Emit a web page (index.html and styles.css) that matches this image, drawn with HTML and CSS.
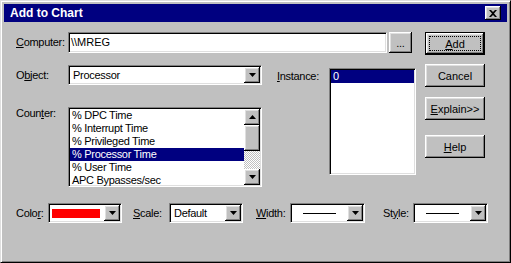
FILE: index.html
```html
<!DOCTYPE html>
<html lang="en">
<head>
    <meta charset="UTF-8">
    <title>Add to Chart</title>
    <link rel="stylesheet" href="styles.css">
</head>
<body>
    <div class="window">
        <div class="titlebar">
            <span class="title">Add to Chart</span>
            <button class="close">
                <svg width="8" height="7" viewBox="0 0 8 7"><path d="M0 0h2l2 2 2-2h2L5 3.5 8 7H6L4 5 2 7H0l3-3.5z"/></svg>
            </button>
        </div>
        <div class="client">
            <div class="top">
                <div class="form">
                    <div class="row row-computer">
                        <label class="lbl lbl-main"><u>C</u>omputer:</label>
                        <div class="edit">\\MREG</div>
                        <button class="btn btn-browse">...</button>
                    </div>
                    <div class="row-mid">
                        <div class="col-left">
                            <div class="row row-object">
                                <label class="lbl lbl-main">O<u>b</u>ject:</label>
                                <div class="combo combo-object">
                                    <span class="combo-value">Processor</span>
                                    <span class="drop"><svg width="7" height="4" viewBox="0 0 7 4"><path d="M0 0h7L3.5 4z"/></svg></span>
                                </div>
                            </div>
                            <div class="row row-counter">
                                <label class="lbl lbl-main">Coun<u>t</u>er:</label>
                                <div class="listbox listbox-counter">
                                    <ul class="items">
                                        <li>% DPC Time</li>
                                        <li>% Interrupt Time</li>
                                        <li>% Privileged Time</li>
                                        <li class="selected">% Processor Time</li>
                                        <li>% User Time</li>
                                        <li>APC Bypasses/sec</li>
                                    </ul>
                                    <div class="scrollbar">
                                        <span class="sb-btn"><svg width="7" height="4" viewBox="0 0 7 4"><path d="M0 4h7L3.5 0z"/></svg></span>
                                        <span class="sb-thumb"></span>
                                        <span class="sb-track"></span>
                                        <span class="sb-btn"><svg width="7" height="4" viewBox="0 0 7 4"><path d="M0 0h7L3.5 4z"/></svg></span>
                                    </div>
                                </div>
                            </div>
                        </div>
                        <div class="instance">
                            <label class="lbl lbl-instance"><u>I</u>nstance:</label>
                            <div class="listbox listbox-instance">
                                <ul class="items">
                                    <li class="selected">0</li>
                                </ul>
                            </div>
                        </div>
                    </div>
                </div>
                <div class="actions">
                    <button class="btn btn-action btn-default"><span class="focus"><u>A</u>dd</span></button>
                    <button class="btn btn-action btn-cancel">Cancel</button>
                    <button class="btn btn-action btn-explain"><u>E</u>xplain&gt;&gt;</button>
                    <button class="btn btn-action btn-help"><u>H</u>elp</button>
                </div>
            </div>
            <div class="bottom">
                <label class="lbl lbl-color">Colo<u>r</u>:</label>
                <div class="combo combo-small">
                    <span class="swatch"></span>
                    <span class="drop"><svg width="7" height="4" viewBox="0 0 7 4"><path d="M0 0h7L3.5 4z"/></svg></span>
                </div>
                <label class="lbl lbl-scale"><u>S</u>cale:</label>
                <div class="combo combo-small">
                    <span class="combo-value">Default</span>
                    <span class="drop"><svg width="7" height="4" viewBox="0 0 7 4"><path d="M0 0h7L3.5 4z"/></svg></span>
                </div>
                <label class="lbl lbl-width"><u>W</u>idth:</label>
                <div class="combo combo-line">
                    <span class="line"></span>
                    <span class="drop"><svg width="7" height="4" viewBox="0 0 7 4"><path d="M0 0h7L3.5 4z"/></svg></span>
                </div>
                <label class="lbl lbl-style">St<u>y</u>le:</label>
                <div class="combo combo-line">
                    <span class="line"></span>
                    <span class="drop"><svg width="7" height="4" viewBox="0 0 7 4"><path d="M0 0h7L3.5 4z"/></svg></span>
                </div>
            </div>
        </div>
    </div>
</body>
</html>
```

FILE: styles.css
```css
body {
    margin: 0;
    background: #c0c0c0;
    font-family: "Liberation Sans", Arial, sans-serif;
    font-size: 11px;
    letter-spacing: -0.3px;
    color: #000;
}

button {
    font: inherit;
    letter-spacing: inherit;
    color: #000;
    background: #c0c0c0;
    border: 0;
    padding: 0;
}

svg {
    display: block;
}

.window {
    width: 511px;
    height: 263px;
    box-sizing: border-box;
    background: #c0c0c0;
    border: 1px solid;
    border-color: #dfdfdf #000 #000 #dfdfdf;
    box-shadow: inset 1px 1px #fff, inset -1px -1px #808080;
    padding: 3px;
}

.titlebar {
    height: 18px;
    margin-bottom: 1px;
    background: #000080;
    display: flex;
    align-items: center;
    justify-content: space-between;
    padding: 0 6px 0 6px;
}

.title {
    color: #fff;
    font-weight: bold;
    font-size: 12px;
    letter-spacing: 0;
}

/* raised 3d bevel */
.close,
.btn,
.drop,
.sb-btn,
.sb-thumb {
    box-sizing: border-box;
    background: #c0c0c0;
    box-shadow: inset -1px -1px #000, inset 1px 1px #fff, inset -2px -2px #808080, inset 2px 2px #dfdfdf;
}

.close {
    width: 16px;
    height: 14px;
    display: flex;
    align-items: center;
    justify-content: center;
}

/* sunken 3d field */
.edit,
.combo,
.listbox {
    box-sizing: border-box;
    background: #fff;
    border: 1px solid;
    border-color: #808080 #fff #fff #808080;
    box-shadow: inset 1px 1px #000, inset -1px -1px #dfdfdf;
}

.client {
    padding: 9px 0 0 12px;
}

.top {
    display: flex;
}

.form {
    width: 409px;
}

.row {
    display: flex;
    align-items: center;
}

.lbl {
    line-height: 13px;
}

.lbl-main {
    width: 52px;
}

.row-computer {
    height: 21px;
}

.edit {
    width: 319px;
    height: 21px;
    padding-left: 2px;
    line-height: 18px;
    letter-spacing: 0;
}

.btn-browse {
    width: 23px;
    height: 21px;
    margin-left: 2px;
}

.row-mid {
    display: flex;
    margin-top: 12px;
}

.col-left {
    width: 246px;
}

.row-object {
    height: 20px;
}

.combo {
    height: 20px;
    display: flex;
    align-items: center;
    justify-content: space-between;
    padding: 1px;
}

.combo-object {
    width: 194px;
}

.combo-value {
    padding-left: 3px;
}

.drop {
    width: 16px;
    height: 16px;
    display: flex;
    align-items: center;
    justify-content: center;
}

.row-counter {
    margin-top: 22px;
    align-items: flex-start;
}

.listbox {
    display: flex;
    overflow: hidden;
    padding: 1px;
}

.listbox-counter {
    width: 194px;
    height: 80px;
}

.items {
    list-style: none;
    margin: 0;
    padding: 0;
    flex: 1;
}

.items li {
    height: 13px;
    line-height: 13px;
    padding-left: 2px;
    white-space: nowrap;
}

.items li.selected {
    background: #000080;
    color: #fff;
}

.scrollbar {
    width: 16px;
    display: flex;
    flex-direction: column;
}

.sb-btn {
    height: 16px;
    display: flex;
    align-items: center;
    justify-content: center;
}

.sb-thumb {
    height: 26px;
}

.sb-track {
    flex: 1;
    background: repeating-conic-gradient(#c0c0c0 0 25%, #fff 0 50%) 0 0 / 2px 2px;
}

.instance {
    display: flex;
    align-items: flex-start;
    margin-left: 15px;
    margin-top: 3px;
}

.lbl-instance {
    width: 52px;
    padding-top: 2px;
}

.listbox-instance {
    width: 87px;
    height: 107px;
}

.actions {
    display: flex;
    flex-direction: column;
}

.btn-action {
    width: 60px;
    height: 23px;
    letter-spacing: 0;
}

.btn-default {
    border: 1px solid #000;
    display: flex;
    align-items: center;
    justify-content: center;
}

.focus {
    box-sizing: border-box;
    width: 52px;
    height: 15px;
    border: 1px dotted #000;
    display: flex;
    align-items: center;
    justify-content: center;
}

.btn-cancel {
    margin-top: 9px;
}

.btn-explain {
    margin-top: 10px;
}

.btn-help {
    margin-top: 15px;
}

.bottom {
    display: flex;
    align-items: center;
    height: 20px;
    margin-top: 16px;
}

.lbl-color {
    width: 32px;
}

.lbl-scale {
    width: 36px;
    margin-left: 11px;
}

.lbl-width {
    width: 34px;
    margin-left: 13px;
}

.lbl-style {
    width: 30px;
    margin-left: 18px;
}

.combo-small {
    width: 74px;
}

.combo-line {
    width: 75px;
}

.swatch {
    width: 48px;
    height: 9px;
    margin-left: 2px;
    background: #f00;
}

.line {
    width: 33px;
    height: 1px;
    margin-left: 11px;
    background: #000;
}
```
